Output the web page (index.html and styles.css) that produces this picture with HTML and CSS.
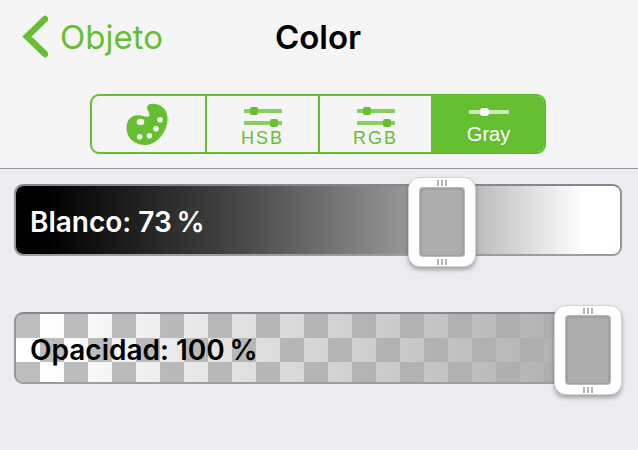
FILE: index.html
```html
<!DOCTYPE html>
<html lang="es">
<head>
    <meta charset="UTF-8">
    <meta name="viewport" content="width=device-width, initial-scale=1.0">
    <title>Color</title>
    <link rel="stylesheet" href="styles.css">
</head>
<body>
    <header class="header">
        <div class="navbar">
            <a class="back" href="#">
                <svg class="chevron" width="26" height="44" viewBox="0 0 26 44">
                    <path d="M23 4L5 21.500L23 39" fill="none" stroke="currentColor" stroke-width="6.500" stroke-linecap="round"/>
                </svg>
                Objeto
            </a>
            <h1 class="title">Color</h1>
        </div>
        <nav class="tabs">
            <button class="tab" type="button" aria-label="Paleta">
                <svg width="42" height="42" viewBox="0 0 42 42">
                    <path fill="currentColor" fill-rule="evenodd" d="M21.200 3.600C22 1 25.400 .5 29 1C37 2 42 8 41.500 17C41 29 31 41.500 20 42C8 42 .5 35 .5 25C.5 17 5 12 12 12.200C17 12.300 20.500 14.800 23 13.200C25 11 20.300 7 21.200 3.600Z M14.500 15.700A3.800 3.200 0 1 0 14.500 22.100A3.800 3.200 0 1 0 14.500 15.700Z M34 14A2.800 2.800 0 1 0 34 19.600A2.800 2.800 0 1 0 34 14Z M30 23A2.800 2.800 0 1 0 30 28.600A2.800 2.800 0 1 0 30 23Z M23.400 30A2.800 2.800 0 1 0 23.400 35.600A2.800 2.800 0 1 0 23.400 30Z M13.700 31A2.800 2.800 0 1 0 13.700 36.600A2.800 2.800 0 1 0 13.700 31Z"/>
                </svg>
            </button>
            <button class="tab" type="button">
                <svg width="38" height="20" viewBox="0 0 38 20" fill="currentColor">
                    <path opacity=".75" d="M0 2h38v4H0zM0 14h38v4H0z"/>
                    <rect x="6" y="0" width="8" height="8" rx="2"/>
                    <rect x="26" y="12" width="8" height="8" rx="2"/>
                </svg>
                <span class="caps">HSB</span>
            </button>
            <button class="tab" type="button">
                <svg width="38" height="20" viewBox="0 0 38 20" fill="currentColor">
                    <path opacity=".75" d="M0 2h38v4H0zM0 14h38v4H0z"/>
                    <rect x="6" y="0" width="8" height="8" rx="2"/>
                    <rect x="26" y="12" width="8" height="8" rx="2"/>
                </svg>
                <span class="caps">RGB</span>
            </button>
            <button class="tab active" type="button">
                <svg width="40" height="8" viewBox="0 0 40 8" fill="currentColor">
                    <path opacity=".65" d="M0 2h40v4H0z"/>
                    <rect x="11" y="0" width="9" height="8" rx="3"/>
                </svg>
                <span class="word">Gray</span>
            </button>
        </nav>
    </header>

    <main class="sliders">
        <div class="slider">
            <div class="track white">
                <label for="white">Blanco: <output id="white_value">73&#8198;%</output></label>
            </div>
            <input id="white" class="range" type="range" min="0" max="100" value="73">
        </div>
        <div class="slider">
            <div class="track opacity">
                <label for="opacity">Opacidad: <output id="opacity_value">100&#8198;%</output></label>
            </div>
            <input id="opacity" class="range" type="range" min="0" max="100" value="100">
        </div>
    </main>

    <script>
        document.querySelectorAll('.range').forEach(range => {
            range.addEventListener('input', () => {
                document.getElementById(range.id + '_value').innerText = range.value + '\u2006%';
            });
        });
    </script>
</body>
</html>
```

FILE: styles.css
```css
*{
    box-sizing: border-box;
}
body{
    margin: 0;
    background: #ebebf0;
    font-family: Inter, "Liberation Sans", sans-serif;
}
.header{
    background: #f5f5f5;
    border-bottom: 1px solid #98989c;
    padding: 0 16px 14px 14px;
}

/* top bar */
.navbar{
    display: grid;
    grid-template-columns: 1fr auto 1fr;
    align-items: center;
    height: 74px;
    padding: 0 8px;
}
.back{
    display: flex;
    align-items: center;
    gap: 12px;
    color: #66bf30;
    font-size: 33px;
    text-decoration: none;
}
.title{
    margin: 0;
    font-size: 33px;
    font-weight: 600;
}

/* segmented control */
.tabs{
    display: grid;
    grid-template-columns: repeat(4, 1fr);
    max-width: 456px;
    height: 60px;
    margin: 20px auto 0;
    border: 2px solid #66bf30;
    border-radius: 9px;
    overflow: hidden;
}
.tab{
    display: flex;
    flex-direction: column;
    align-items: center;
    justify-content: center;
    padding: 6px 0 0;
    border: none;
    border-left: 2px solid #66bf30;
    background: transparent;
    color: #66bf30;
    font-family: "Liberation Sans", sans-serif;
    cursor: pointer;
}
.tab:first-child{
    padding: 0 4px 0 0;
    border-left: none;
}
.active{
    background: #66bf30;
    color: white;
    gap: 6px;
}
.caps{
    margin-top: 1px;
    font-size: 18px;
    line-height: 20px;
    letter-spacing: 2px;
}
.word{
    font-size: 20px;
    line-height: 24px;
}

/* sliders */
.sliders{
    display: grid;
    gap: 38px;
    padding: 8px 16px 8px 14px;
}
.slider{
    display: grid;
    align-items: start;
}
.track, .range{
    grid-area: 1 / 1;
}
.track{
    display: flex;
    align-items: center;
    height: 72px;
    margin-top: 7px;
    padding: 3px 0 0 14px;
    border: 2px solid;
    border-color: #87878a #93979d #9a9ea3;
    border-radius: 9px;
    font-size: 28px;
    font-weight: 600;
    background-clip: padding-box;
}
.white{
    color: white;
    background-image: linear-gradient(to right, #000 5%, #404040 34%, #a8a8a8 71%, #fff 94%);
}
.opacity{
    color: black;
    background-image:
        linear-gradient(to right, rgba(173, 173, 173, 0) 4%, #adadad 95%),
        conic-gradient(#fff 25%, #bdbdbd 0 50%, #fff 0 75%, #bdbdbd 0);
    background-size: auto, 48px 48px;
}
.range{
    -webkit-appearance: none;
    appearance: none;
    width: 100%;
    height: 90px;
    margin: 0;
    background: transparent;
    cursor: pointer;
}
.range::-webkit-slider-thumb{
    -webkit-appearance: none;
    width: 68px;
    height: 90px;
    border: 1px solid #d2d2d4;
    border-radius: 12px;
    background:
        repeating-linear-gradient(to right, #b4b4b4 0 2px, #fff 2px 4px) center 2px / 10px 6px no-repeat,
        repeating-linear-gradient(to right, #b4b4b4 0 2px, #fff 2px 4px) center 81px / 10px 6px no-repeat,
        url("data:image/svg+xml,%3Csvg xmlns='http://www.w3.org/2000/svg' width='46' height='70'%3E%3Crect width='46' height='70' rx='4' fill='%23bbb'/%3E%3Crect x='1' y='1' width='44' height='68' rx='3' fill='%23a0a0a0'/%3E%3Crect x='3' y='3' width='40' height='65' rx='2' fill='%23adadad'/%3E%3C/svg%3E") center / 46px 70px no-repeat,
        #fff;
    box-shadow: 0 3px 4px rgba(0, 0, 0, 0.3);
}
```
